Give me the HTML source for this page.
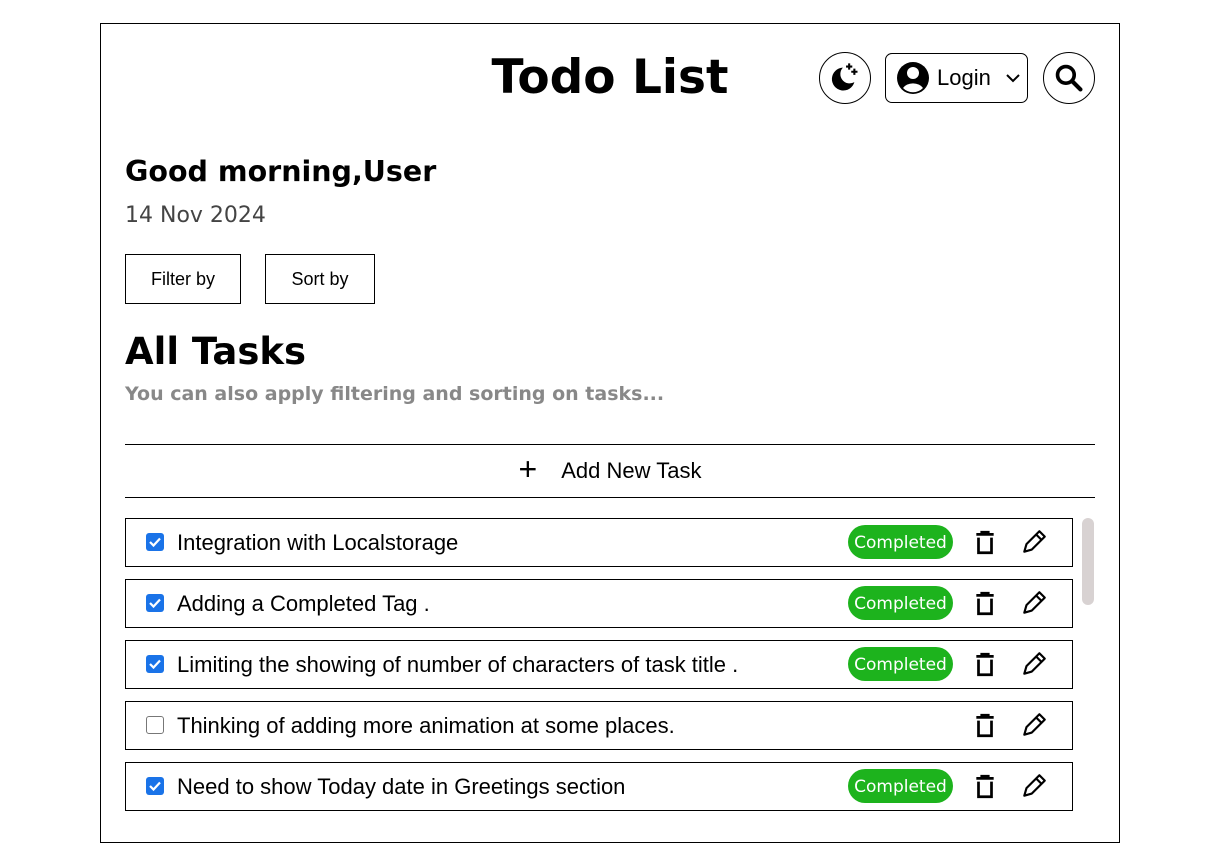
<!DOCTYPE html>
<html><head><style>
body{margin:0;background:#fff;font-family:"Liberation Sans",sans-serif;}
.c{position:absolute;left:100px;top:23px;width:1018px;height:818px;border:1px solid #000;}
.a{position:absolute;}
h1{position:absolute;margin:0;left:0;width:1220px;text-align:center;top:50px;font:bold 47px "DejaVu Sans",sans-serif;}
.circ{position:absolute;width:52px;height:52px;border:1px solid #000;border-radius:50%;box-sizing:border-box;}
.btn{position:absolute;border:1px solid #000;box-sizing:border-box;font-size:18px;display:flex;align-items:center;justify-content:center;}
.row{position:absolute;left:125px;width:948px;height:49px;border:1px solid #000;box-sizing:border-box;}
.row .t{position:absolute;left:51px;top:11px;font-size:22px;}
.cb{position:absolute;left:20px;top:14px;width:18px;height:18px;border-radius:3px;background:#1a73e8;box-sizing:border-box;}
.cb.off{background:#fff;border:1.5px solid #777;}
.badge{position:absolute;left:722px;top:6px;width:105px;height:34px;border-radius:17px;background:#1db31d;color:#fff;font:17px "DejaVu Sans",sans-serif;text-align:center;line-height:36px;}
.tr{position:absolute;left:848px;top:11px;}
.pe{position:absolute;left:894px;top:9px;}
</style></head><body>
<div class="c"></div>
<h1>Todo List</h1>
<div class="circ" style="left:819px;top:52px">
<svg width="50" height="50" viewBox="0 0 48 48" style="position:absolute;left:0;top:0"><path d="M22 14a11 11 0 1 0 11 14a9 9 0 0 1 -11 -14z" fill="#000"/><path d="M28 10v6M25 13h6M33 15v6M30 18h6" stroke="#000" stroke-width="2"/></svg></div>
<div class="btn" style="left:885px;top:53px;width:143px;height:50px;border-radius:7px;font-size:22px;justify-content:flex-start;padding-left:10px">
<svg width="34" height="34" viewBox="0 0 34 34"><circle cx="17" cy="17" r="16" fill="#000"/><circle cx="17" cy="12" r="6" fill="#fff"/><path d="M7 27a11 8 0 0 1 20 0a14 14 0 0 1 -20 0z" fill="#fff"/></svg>
<span style="margin-left:7px">Login</span>
<svg width="16" height="10" viewBox="0 0 16 10" style="margin-left:14px"><path d="M2 2l6 6l6-6" stroke="#000" stroke-width="2" fill="none"/></svg></div>
<div class="circ" style="left:1043px;top:52px">
<svg width="50" height="50" viewBox="0 0 48 48" style="position:absolute;left:0;top:0"><circle cx="21" cy="21" r="8" stroke="#000" stroke-width="3.5" fill="none"/><path d="M27 27l8 8" stroke="#000" stroke-width="4" stroke-linecap="round"/></svg></div>
<div class="a" style="left:125px;top:155px;font:bold 28.5px 'DejaVu Sans',sans-serif">Good morning,User</div>
<div class="a" style="left:125px;top:203px;font:22px 'DejaVu Sans',sans-serif;color:#444">14 Nov 2024</div>
<div class="btn" style="left:125px;top:254px;width:116px;height:50px">Filter by</div>
<div class="btn" style="left:265px;top:254px;width:110px;height:50px">Sort by</div>
<div class="a" style="left:125px;top:330px;font:bold 37px 'DejaVu Sans',sans-serif">All Tasks</div>
<div class="a" style="left:125px;top:383px;font:bold 19px 'DejaVu Sans',sans-serif;color:#888">You can also apply filtering and sorting on tasks...</div>
<div class="a" style="left:125px;top:444px;width:970px;height:52px;border-top:1px solid #000;border-bottom:1px solid #000;display:flex;align-items:center;justify-content:center;font-size:22px">
<span style="font-size:32px;font-weight:300;margin-right:24px;margin-top:-4px">+</span>Add New Task</div>
<div class="a" style="left:1082px;top:518px;width:12px;height:87px;border-radius:6px;background:#d8d2d2"></div>

<div class="row" style="top:518px"><div class="cb"><svg width="18" height="18" viewBox="0 0 18 18"><path d="M4 9l3.5 3.5L14 5.5" stroke="#fff" stroke-width="2.2" fill="none"/></svg></div><div class="t">Integration with Localstorage</div><div class="badge">Completed</div>
<svg class="tr" width="22" height="26" viewBox="0 0 20 24"><path d="M2 4h16M7 4V2h6v2M4 7v14h12V7" stroke="#000" stroke-width="2.5" fill="none"/></svg>
<svg class="pe" width="28" height="28" viewBox="0 0 26 26"><path d="M4 22l2-7L18 3l5 5L11 20z M15 6l5 5" stroke="#000" stroke-width="2" fill="none" stroke-linejoin="round"/></svg></div>
<div class="row" style="top:579px"><div class="cb"><svg width="18" height="18" viewBox="0 0 18 18"><path d="M4 9l3.5 3.5L14 5.5" stroke="#fff" stroke-width="2.2" fill="none"/></svg></div><div class="t">Adding a Completed Tag .</div><div class="badge">Completed</div>
<svg class="tr" width="22" height="26" viewBox="0 0 20 24"><path d="M2 4h16M7 4V2h6v2M4 7v14h12V7" stroke="#000" stroke-width="2.5" fill="none"/></svg>
<svg class="pe" width="28" height="28" viewBox="0 0 26 26"><path d="M4 22l2-7L18 3l5 5L11 20z M15 6l5 5" stroke="#000" stroke-width="2" fill="none" stroke-linejoin="round"/></svg></div>
<div class="row" style="top:640px"><div class="cb"><svg width="18" height="18" viewBox="0 0 18 18"><path d="M4 9l3.5 3.5L14 5.5" stroke="#fff" stroke-width="2.2" fill="none"/></svg></div><div class="t">Limiting the showing of number of characters of task title .</div><div class="badge">Completed</div>
<svg class="tr" width="22" height="26" viewBox="0 0 20 24"><path d="M2 4h16M7 4V2h6v2M4 7v14h12V7" stroke="#000" stroke-width="2.5" fill="none"/></svg>
<svg class="pe" width="28" height="28" viewBox="0 0 26 26"><path d="M4 22l2-7L18 3l5 5L11 20z M15 6l5 5" stroke="#000" stroke-width="2" fill="none" stroke-linejoin="round"/></svg></div>
<div class="row" style="top:701px"><div class="cb off"></div><div class="t">Thinking of adding more animation at some places.</div>
<svg class="tr" width="22" height="26" viewBox="0 0 20 24"><path d="M2 4h16M7 4V2h6v2M4 7v14h12V7" stroke="#000" stroke-width="2.5" fill="none"/></svg>
<svg class="pe" width="28" height="28" viewBox="0 0 26 26"><path d="M4 22l2-7L18 3l5 5L11 20z M15 6l5 5" stroke="#000" stroke-width="2" fill="none" stroke-linejoin="round"/></svg></div>
<div class="row" style="top:762px"><div class="cb"><svg width="18" height="18" viewBox="0 0 18 18"><path d="M4 9l3.5 3.5L14 5.5" stroke="#fff" stroke-width="2.2" fill="none"/></svg></div><div class="t">Need to show Today date in Greetings section</div><div class="badge">Completed</div>
<svg class="tr" width="22" height="26" viewBox="0 0 20 24"><path d="M2 4h16M7 4V2h6v2M4 7v14h12V7" stroke="#000" stroke-width="2.5" fill="none"/></svg>
<svg class="pe" width="28" height="28" viewBox="0 0 26 26"><path d="M4 22l2-7L18 3l5 5L11 20z M15 6l5 5" stroke="#000" stroke-width="2" fill="none" stroke-linejoin="round"/></svg></div>
</body></html>
